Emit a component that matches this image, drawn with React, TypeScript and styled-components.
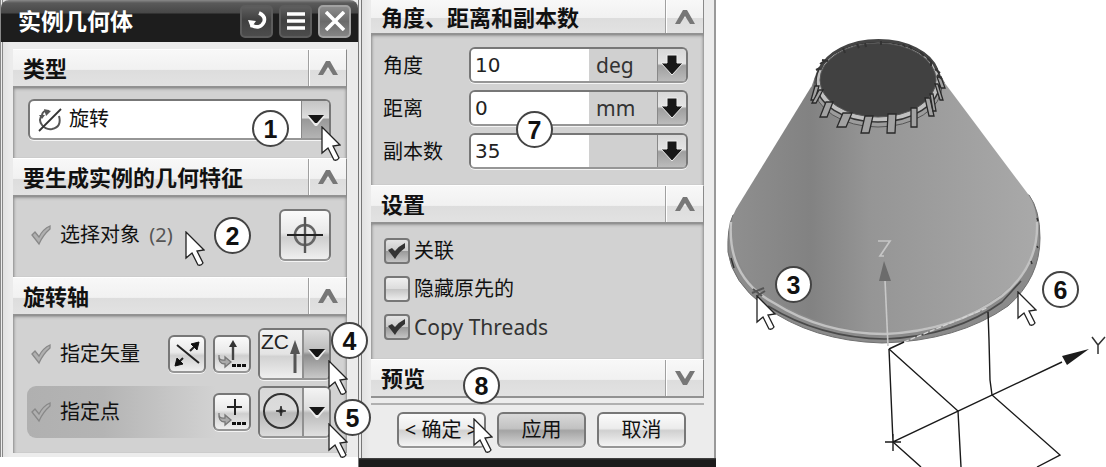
import React from 'react';
import styled, { createGlobalStyle, css } from 'styled-components';

const GlobalStyle = createGlobalStyle`
  * { box-sizing: border-box; }
  body { margin: 0; background: #fff; }
  body, button, input, select {
    font-family: "Noto Sans", "Noto Sans CJK SC", sans-serif;
    font-size: 20px;
    line-height: 24px;
    color: #111;
  }
  button { padding: 0; cursor: pointer; }
`;

const Page = styled.main`
  display: grid;
  grid-template-columns: 358fr 358fr 390fr;
  align-items: start;
  overflow: hidden;
`;

const Dialog = styled.section<{ $continued?: boolean }>`
  position: relative;
  z-index: ${p => (p.$continued ? 0 : 1)};
  border-left: ${p => (p.$continued ? '4px double #777' : '3px double #888')};
  border-right: ${p => (p.$continued ? '2px solid #999' : '0')};
  background: linear-gradient(90deg, #e2e2e2, #ececec 8px, #ececec);
`;

const BottomBar = styled.div`
  height: 9px;
  margin: 0 -2px 0 -3px;
  background: linear-gradient(#4a4a4a, #1b1b1b 2px);
`;

const TitleBar = styled.header`
  display: flex;
  align-items: center;
  gap: 6px;
  height: 42px;
  margin-left: -2px;
  padding: 0 7px 0 17px;
  border-radius: 8px 8px 0 0;
  background: linear-gradient(#8a8a8a, #5a5a5a 3px, #474747 13px, #1d1d1d 14px);
`;

const Title = styled.h1`
  flex: 1;
  margin: 0;
  color: #fff;
  font-size: 23px;
  line-height: 28px;
  font-weight: 700;
`;

const TitleButton = styled.button<{ $bright?: boolean }>`
  display: grid;
  place-items: center;
  width: 33px;
  height: 33px;
  border: 2px solid ${p => (p.$bright ? '#a2a2a2' : '#5c5c5c')};
  border-radius: 5px;
  background: ${p =>
    p.$bright ? 'linear-gradient(#8c8c8c, #6a6a6a 50%, #858585)' : 'linear-gradient(#5e5e5e, #404040 45%, #4c4c4c)'};
`;

const Sections = styled.div<{ $first?: boolean }>`
  margin: ${p => (p.$first ? '7px 11px 0 10px' : '0 10px 0 9px')};
  padding-bottom: ${p => (p.$first ? '4px' : '0')};
`;

const SectionHeader = styled.div<{ $cut?: boolean }>`
  display: flex;
  align-items: stretch;
  height: ${p => (p.$cut ? '35px' : '39px')};
  border-top: ${p => (p.$cut ? '0' : '1px solid #fff')};
  border-bottom: 2px solid #929292;
  border-right: 1px solid #8a8a8a;
  background: linear-gradient(#f8f8f8, #f1f1f1 54%, #dddddd 56%, #e2e2e2);
`;

const SectionTitle = styled.h2`
  flex: 1;
  align-self: center;
  margin: 0;
  padding-left: 10px;
  font-size: 22px;
  line-height: 28px;
  font-weight: 700;
`;

const Toggle = styled.button`
  display: grid;
  place-items: center;
  width: 38px;
  border: 0;
  border-left: 1px solid #a0a0a0;
  box-shadow: inset 1px 0 #fff;
  background: none;
`;

const SectionBody = styled.div<{ $pad: string }>`
  display: flex;
  flex-direction: column;
  padding: ${p => p.$pad};
  background: #d2d2d2;
  box-shadow: inset 3px 0 3px -2px #888, inset -3px 0 3px -2px #888, inset 0 3px 3px -2px #999;
`;

const frame = css`
  border: 2px solid #777;
  border-bottom-color: #969696;
  border-radius: 6px;
  box-shadow: 0 1px #f4f4f4;
`;

const Anchor = styled.div`
  position: relative;
`;

const SelectBox = styled.div`
  display: grid;
  grid-template-columns: 40px 1fr 28px;
  align-items: stretch;
  height: 41px;
  overflow: hidden;
  background: #fff;
  ${frame}
`;

const SelectIcon = styled.span`
  grid-area: 1 / 1;
  z-index: 1;
  display: grid;
  place-items: center;
  pointer-events: none;
`;

const TypeSelect = styled.select`
  grid-area: 1 / 1 / 2 / 4;
  appearance: none;
  border: 0;
  padding: 0 28px 2px 39px;
  background: transparent;
`;

const SelectCaret = styled.span`
  grid-area: 1 / 3;
  display: grid;
  place-items: center;
  border-left: 1px solid #888;
  background: linear-gradient(#c4c4c4, #ddd 45%, #999 50%, #b4b4b4);
  pointer-events: none;
`;

const ToolRow = styled.div<{ $active?: boolean }>`
  position: relative;
  display: flex;
  align-items: center;
  gap: 7px;
  height: 52px;
  border-radius: 9px;
  background: ${p => (p.$active ? 'linear-gradient(90deg, #b0b0b0, #b4b4b4 25%, #d2d2d2 62%)' : 'none')};
`;

const RowLabel = styled.span`
  display: flex;
  align-items: center;
  gap: 8px;
  flex: 1;
  padding-left: 3px;
`;

const Muted = styled.span`
  margin-left: 4px;
  color: #555;
`;

const IconButton = styled.button<{ $size: number }>`
  display: grid;
  place-items: center;
  width: ${p => p.$size}px;
  height: ${p => p.$size}px;
  background: linear-gradient(#fafafa, #e9e9e9 45%, #cfcfcf 55%, #efefef);
  ${frame}
`;

const SplitButton = styled.div`
  display: flex;
  width: 73px;
  height: 52px;
  overflow: hidden;
  ${frame}
`;

const SplitMain = styled.button<{ $pressed?: boolean }>`
  flex: 1;
  border: 0;
  background: ${p =>
    p.$pressed ? 'linear-gradient(#d8d8d8, #dcdcdc 45%, #b8b8b8 52%, #dcdcdc)' : 'linear-gradient(#f2f2f2, #e4e4e4 50%, #d2d2d2 55%, #efefef)'};
`;

const SplitMore = styled.button<{ $dark?: boolean }>`
  display: grid;
  place-items: center;
  width: 27px;
  border: 0;
  border-left: 2px solid #909090;
  background: ${p =>
    p.$dark ? 'linear-gradient(#ddd, #bbb 45%, #8e8e8e 52%, #c8c8c8)' : 'linear-gradient(#f4f4f4, #ddd 45%, #bababa 52%, #e0e0e0)'};
`;

const FieldRow = styled.div`
  display: flex;
  align-items: center;
`;

const FieldLabel = styled.label`
  flex: 1;
  padding-top: 2px;
`;

const Field = styled.div`
  display: flex;
  width: 219px;
  height: 36px;
  overflow: hidden;
  background: #d0d0d0;
  ${frame}
`;

const NumberInput = styled.input`
  width: 118px;
  border: 0;
  padding: 0 4px;
  background: #fff;
  color: #222;
  font-family: "DejaVu Sans", sans-serif;
`;

const Unit = styled.span`
  flex: 1;
  padding: 4px 0 0 7px;
  color: #333;
  font-size: 21px;
`;

const FieldMenu = styled.button`
  display: grid;
  place-items: center;
  width: 29px;
  border: 0;
  border-left: 1px solid #888;
  background: linear-gradient(#d8d8d8, #e4e4e4 45%, #9f9f9f 52%, #bbb);
`;

const CheckLabel = styled.label`
  display: grid;
  grid-template-columns: 26px 1fr;
  align-items: center;
  column-gap: 4px;
`;

const Latin = styled.span`
  color: #333;
  font-size: 21px;
`;

const Checkbox = styled.input`
  grid-area: 1 / 1;
  appearance: none;
  width: 26px;
  height: 26px;
  margin: 0;
  border: 2px solid #777;
  border-radius: 4px;
  background: linear-gradient(#f0f0f0, #ddd 48%, #c4c4c4 50%, #ececec);
  &:checked { background: linear-gradient(#e4e4e4, #ccc 48%, #999 50%, #c4c4c4); }
  &:not(:checked) + svg { visibility: hidden; }
`;

const Tick = styled.svg`
  grid-area: 1 / 1;
  justify-self: center;
  pointer-events: none;
`;

const Footer = styled.footer`
  position: relative;
  display: flex;
  justify-content: flex-end;
  gap: 11px;
  margin: 5px 10px 0 9px;
  padding: 7px 18px 10px 0;
  border-top: 2px solid #b0b0b0;
`;

const PushButton = styled.button<{ $pressed?: boolean }>`
  width: 89px;
  height: 36px;
  background: ${p =>
    p.$pressed ? 'linear-gradient(#d8d8d8, #c2c2c2 45%, #a4a4a4 52%, #d4d4d4)' : 'linear-gradient(#fbfbfb, #ececec 45%, #d0d0d0 52%, #f4f4f4)'};
  white-space: pre;
  ${frame}
`;

const Scene = styled.figure`
  position: relative;
  margin: 0;
`;

const Drawing = styled.svg`
  display: block;
  width: 100%;
`;

type Spot = { $x: string; $y: string };

const Badge = styled.span<Spot>`
  position: absolute;
  z-index: 2;
  left: ${p => p.$x};
  top: ${p => p.$y};
  display: grid;
  place-items: center;
  width: 37px;
  height: 37px;
  border: 2px solid #444;
  border-radius: 50%;
  background: #fff;
  font: 700 25px/32px "Liberation Sans", Arial, sans-serif;
  pointer-events: none;
`;

const Pointer = styled.svg<Spot>`
  position: absolute;
  z-index: 3;
  left: ${p => p.$x};
  top: ${p => p.$y};
  pointer-events: none;
`;

const Cursor = ({ x, y }: { x: string; y: string }) => (
  <Pointer $x={x} $y={y} width="20" height="36" viewBox="-1 -1 20 36" aria-hidden="true">
    <path d="M0 0V26L6 21L12 33Q15 34 17 31L11 19L18 18Z" fill="#fff" stroke="#222" strokeWidth="1.3" />
  </Pointer>
);

const Chevron = ({ down }: { down?: boolean }) => (
  <svg width="22" height="16" viewBox="0 0 22 16" aria-hidden="true">
    <path
      d={down ? 'M1 1H6L11 9L16 1H21L13 15H9Z' : 'M1 15H6L11 7L16 15H21L13 1H9Z'}
      fill="#777"
    />
  </svg>
);

const Caret = () => (
  <svg width="20" height="14" viewBox="0 0 20 14" aria-hidden="true">
    <path d="M1 3H19L11 13H9Z" fill="#eee" />
    <path d="M2 2H18L11 10H9Z" fill="#151515" />
  </svg>
);

const GreyCheck = () => (
  <svg width="22" height="22" viewBox="0 0 22 22" aria-hidden="true">
    <path d="M2 11L5 8L9 13Q13 5 20 2V5Q13 11 9 20Z" fill="#b0b0b0" stroke="#888" strokeWidth="1.3" />
  </svg>
);

const HookDots = () => (
  <>
    <path d="M4 18Q3 24 10 23V20L16 25L10 30V27Q3 27 4 18Z" fill="#aaa" stroke="#777" strokeWidth="1.3" />
    <path d="M17 27h4v3h-4zM22 27h4v3h-4zM27 27h4v3h-4z" fill="#111" />
  </>
);

const Section = ({
  title, cut, closed, pad = '', children,
}: { title: string; cut?: boolean; closed?: boolean; pad?: string; children?: React.ReactNode }) => (
  <div>
    <SectionHeader $cut={cut}>
      <SectionTitle>{title}</SectionTitle>
      <Toggle aria-label={title} aria-expanded={!closed}><Chevron down={closed} /></Toggle>
    </SectionHeader>
    {children && <SectionBody $pad={pad}>{children}</SectionBody>}
  </div>
);

const fields = [
  { id: 'angle', label: '角度', value: '10', unit: 'deg' },
  { id: 'distance', label: '距离', value: '0', unit: 'mm' },
  { id: 'copies', label: '副本数', value: '35', unit: '' },
];

const options = [
  { label: '关联', on: true },
  { label: '隐藏原先的', on: false },
  { label: 'Copy Threads', on: true, latin: true },
];

/* Clips round the mouth of the cone: upper edge, lower edge and width. */
const clips = [
  [815, 86, 811, 100, 4], [819, 90, 812, 103, 4], [826, 102, 820, 117, 7], [843, 113, 837, 127, 9],
  [865, 116, 861, 133, 8], [888, 114, 887, 133, 8], [911, 108, 911, 127, 6], [925, 98, 929, 116, 5],
  [930, 94, 933, 111, 3], [935, 84, 940, 100, 3], [937, 77, 941, 88, 4],
];

const ticks = [
  [820, 64, 826, 60], [822, 60, 828, 61], [816, 70, 820, 68], [843, 48, 845, 53], [857, 44, 859, 48],
  [865, 43, 866, 47], [881, 41, 881, 45], [903, 44, 905, 47], [909, 46, 912, 49], [920, 52, 924, 56],
  [927, 58, 932, 63], [931, 61, 931, 66], [935, 69, 940, 73], [937, 75, 942, 79],
];

const ConeDrawing = () => (
  <Drawing viewBox="716 0 390 467" role="img" aria-label="ZC">
    <defs>
      <linearGradient id="side" x1="0" x2="1" y1="0" y2="0">
        <stop offset="0" stopColor="#8f8f8f" />
        <stop offset="0.26" stopColor="#828282" />
        <stop offset="0.45" stopColor="#959595" />
        <stop offset="0.72" stopColor="#9f9f9f" />
        <stop offset="1" stopColor="#a9a9a9" />
      </linearGradient>
    </defs>
    <path
      d="M733 215Q727 228 728 252Q732 282 764 306Q812 341 882 343Q958 341 1008 306Q1040 278 1040 238Q1040 210 1029 195Z"
      fill="#8b8b8b" stroke="#707070"
    />
    <path
      d="M811 87L736 209Q729 222 732 242Q740 278 774 300Q823 331 885 333Q954 330 1002 294Q1035 267 1037 233Q1038 208 1028 194L944 82Z"
      fill="url(#side)"
    />
    <path d="M731 222Q727 278 774 303Q823 334 885 334Q954 331 1002 296Q1039 266 1037 222" fill="none" stroke="#c2c2c2" strokeWidth="2.4" />
    <path d="M768 306Q820 338 885 339Q955 336 1002 302L1021 281" fill="none" stroke="#4a4a4a" strokeWidth="1.6" />
    <path d="M731 258L734 268M1037 246L1038 248M1031 261L1032 264M1037 218L1038 221" stroke="#333" strokeWidth="1.5" />
    <path d="M811 88L818 68Q835 41 879 41Q925 42 937 68L945 83Z" fill="#858585" />
    <ellipse cx="878" cy="86" rx="64" ry="41" fill="#9c9c9c" stroke="#555" />
    <ellipse cx="878" cy="82" rx="62" ry="40" fill="#c0c0c0" stroke="#333" strokeWidth="1.5" />
    <ellipse cx="878" cy="80" rx="58" ry="37" fill="#414141" stroke="#555" />
    <path d="M820 70A60 38 0 0 1 937 70" fill="none" stroke="#444" strokeWidth="3" />
    {clips.map(([x, y, bx, by, w]) => (
      <path key={`${x}-${y}`} d={`M${x} ${y}H${x + w}L${bx + w} ${by}H${bx}Z`} fill="#a2a2a2" stroke="#292929" strokeWidth="1.3" />
    ))}
    {ticks.map(([x, y, bx, by]) => (
      <path key={`${x}-${y}`} d={`M${x} ${y}L${bx} ${by}`} stroke="#333" strokeWidth="2" />
    ))}
    <path d="M752 293L764 288M753 289L762 296M757 296L765 291" stroke="#555" strokeWidth="2" />
    <g fill="none" stroke="#1a1a1a" strokeWidth="1.4">
      <path d="M889 349L893 442L1062 362M885 442H901M893 434V451" />
      <path d="M889 349L958 411L961 467M988 312L989 340L990 380L992 395L1060 455L1037 467M893 442L921 467" />
      <path d="M889 349L904 342" />
    </g>
    <path d="M904 342L987 308" stroke="#d4d4d4" strokeWidth="1.3" strokeDasharray="5 2" />
    <path d="M885 280L888 346" stroke="#c8c8c8" strokeWidth="1.6" />
    <path d="M884 261L891 281H879Z" fill="#6c6c6c" />
    <path d="M878 241H890L880 256H884" fill="none" stroke="#c6c6c6" strokeWidth="1.7" />
    <path d="M1089 349L1062 356L1067 365Z" fill="#1c1c1c" />
    <path d="M1092 337L1098 345L1105 337M1098 345V354" fill="none" stroke="#333" strokeWidth="1.5" />
  </Drawing>
);

export default function App() {
  return (
    <>
      <GlobalStyle />
      <Page>
        <Dialog>
          <TitleBar>
            <Title>实例几何体</Title>
            <TitleButton aria-label="重置">
              <svg width="22" height="22" viewBox="0 0 22 22">
                <path d="M13 3Q20 6 18 12Q14 20 5 15" fill="none" stroke="#fff" strokeWidth="3.6" />
                <path d="M2 10L10 11L5 18Z" fill="#fff" />
              </svg>
            </TitleButton>
            <TitleButton aria-label="菜单">
              <svg width="20" height="20" viewBox="0 0 20 20">
                <path d="M1 3H19M1 10H19M1 17H19" stroke="#fff" strokeWidth="3.4" />
              </svg>
            </TitleButton>
            <TitleButton $bright aria-label="关闭">
              <svg width="20" height="20" viewBox="0 0 20 20">
                <path d="M1 1L19 19M19 1L1 19" stroke="#fff" strokeWidth="3.6" />
              </svg>
            </TitleButton>
          </TitleBar>
          <Sections $first>
            <Section title="类型" pad="11px 16px 18px 15px">
              <Anchor>
                <SelectBox>
                  <SelectIcon>
                    <svg width="26" height="26" viewBox="0 0 26 26">
                      <path d="M5 8Q1 13 5 18Q9 23 15 22Q25 20 22 9M12 4Q5 3 5 9" fill="none" stroke="#555" strokeWidth="2" />
                      <path d="M7 2L14 4L9 9ZM2 8H8L5 12Z" fill="#555" />
                      <path d="M2 24L24 2" stroke="#333" strokeWidth="1.8" />
                    </svg>
                  </SelectIcon>
                  <TypeSelect aria-label="类型" defaultValue="旋转"><option>旋转</option></TypeSelect>
                  <SelectCaret><Caret /></SelectCaret>
                </SelectBox>
                <Badge $x="calc(100% - 79px)" $y="11px">1</Badge>
                <Cursor x="calc(100% - 10px)" y="27px" />
              </Anchor>
            </Section>
            <Section title="要生成实例的几何特征" pad="12px 16px 16px 14px">
              <ToolRow>
                <RowLabel><GreyCheck /><span>选择对象<Muted> (2)</Muted></span></RowLabel>
                <IconButton $size={52} aria-label="选择对象">
                  <svg width="38" height="40" viewBox="0 0 38 40" fill="none">
                    <circle cx="19" cy="20" r="10" stroke="#666" strokeWidth="2.6" />
                    <path d="M19 2V38" stroke="#555" strokeWidth="2.4" />
                    <path d="M1 20H37" stroke="#222" strokeWidth="2" />
                  </svg>
                </IconButton>
                <Badge $x="187px" $y="8px">2</Badge>
                <Cursor x="158px" y="22px" />
              </ToolRow>
            </Section>
            <Section title="旋转轴" pad="12px 16px 15px 14px">
              <ToolRow>
                <RowLabel><GreyCheck />指定矢量</RowLabel>
                <IconButton $size={38} aria-label="反向">
                  <svg width="32" height="32" viewBox="0 0 32 32">
                    <path d="M6 7L28 25M5 27L12 20M19 13L26 6" stroke="#222" strokeWidth="2" />
                    <path d="M28 4L20 6L26 12ZM4 28L12 26L6 20Z" fill="#111" stroke="#111" />
                  </svg>
                </IconButton>
                <IconButton $size={38} aria-label="矢量对话框">
                  <svg width="34" height="34" viewBox="0 0 34 34">
                    <path d="M18 23V8" stroke="#444" strokeWidth="2.4" />
                    <path d="M18 3L22 10H14Z" fill="#333" />
                    <HookDots />
                  </svg>
                </IconButton>
                <SplitButton>
                  <SplitMain aria-label="ZC">
                    <svg width="42" height="48" viewBox="0 0 42 48">
                      <text x="1" y="19" fontFamily="Liberation Sans, sans-serif" fontSize="21" fill="#222">ZC</text>
                      <path d="M35 43V20" stroke="#555" strokeWidth="3" />
                      <path d="M35 10L40 24H30Z" fill="#555" />
                    </svg>
                  </SplitMain>
                  <SplitMore $dark aria-label="矢量选项"><Caret /></SplitMore>
                </SplitButton>
                <Badge $x="100%" $y="-6px">4</Badge>
                <Cursor x="calc(100% - 3px)" y="32px" />
              </ToolRow>
              <Gap />
              <ToolRow $active>
                <RowLabel><GreyCheck />指定点</RowLabel>
                <IconButton $size={38} aria-label="点对话框">
                  <svg width="34" height="34" viewBox="0 0 34 34">
                    <path d="M20 4V20M12 12H27" stroke="#222" strokeWidth="2" />
                    <HookDots />
                  </svg>
                </IconButton>
                <SplitButton>
                  <SplitMain $pressed aria-label="圆心">
                    <svg width="42" height="46" viewBox="0 0 42 46">
                      <circle cx="21" cy="23" r="17" fill="none" stroke="#333" strokeWidth="2" />
                      <path d="M21 18L22 22L26 23L22 24L21 28L20 24L16 23L20 22Z" fill="#222" stroke="#333" />
                    </svg>
                  </SplitMain>
                  <SplitMore aria-label="点选项"><Caret /></SplitMore>
                </SplitButton>
                <Badge $x="calc(100% + 3px)" $y="13px">5</Badge>
                <Cursor x="calc(100% - 3px)" y="37px" />
              </ToolRow>
            </Section>
          </Sections>
        </Dialog>

        <Dialog $continued>
          <Sections>
            <Section title="角度、距离和副本数" cut pad="12px 16px 16px 12px">
              <FieldList>
                {fields.map(f => (
                  <FieldRow key={f.id}>
                    <FieldLabel htmlFor={f.id}>{f.label}</FieldLabel>
                    <Field>
                      <NumberInput id={f.id} defaultValue={f.value} />
                      <Unit>{f.unit}</Unit>
                      <FieldMenu aria-label={`${f.label}选项`}>
                        <svg width="24" height="24" viewBox="0 0 24 24">
                          <path d="M7 2H17V10H23L12 22L1 10H7Z" fill="#181818" stroke="#eee" />
                        </svg>
                      </FieldMenu>
                    </Field>
                  </FieldRow>
                ))}
                <Badge $x="calc(100% - 172px)" $y="64px">7</Badge>
              </FieldList>
            </Section>
            <Section title="设置" pad="14px 16px 19px 13px">
              <CheckList>
                {options.map(o => (
                  <CheckLabel key={o.label}>
                    <Checkbox type="checkbox" defaultChecked={o.on} />
                    <Tick width="20" height="18" viewBox="0 0 20 18">
                      <path d="M1 8L5 6L8 9Q12 4 18 1V6Q12 10 8 17Z" fill="#333" />
                    </Tick>
                    {o.latin ? <Latin>{o.label}</Latin> : <span>{o.label}</span>}
                  </CheckLabel>
                ))}
              </CheckList>
            </Section>
            <Section title="预览" closed />
          </Sections>
          <Footer>
            <PushButton>{'< 确定 >'}</PushButton>
            <PushButton $pressed>应用</PushButton>
            <PushButton>取消</PushButton>
            <Badge $x="calc(100% - 241px)" $y="-38px">8</Badge>
            <Cursor x="calc(100% - 231px)" y="13px" />
          </Footer>
          <BottomBar />
        </Dialog>

        <Scene>
          <ConeDrawing />
          <Badge $x="59px" $y="266px">3</Badge>
          <Cursor x="40px" y="295px" />
          <Badge $x="326px" $y="271px">6</Badge>
          <Cursor x="301px" y="291px" />
        </Scene>
      </Page>
    </>
  );
}

const Gap = styled.div`
  height: 6px;
`;

const FieldList = styled.div`
  position: relative;
  display: flex;
  flex-direction: column;
  gap: 7px;
`;

const CheckList = styled.div`
  display: flex;
  flex-direction: column;
  gap: 12px;
`;
